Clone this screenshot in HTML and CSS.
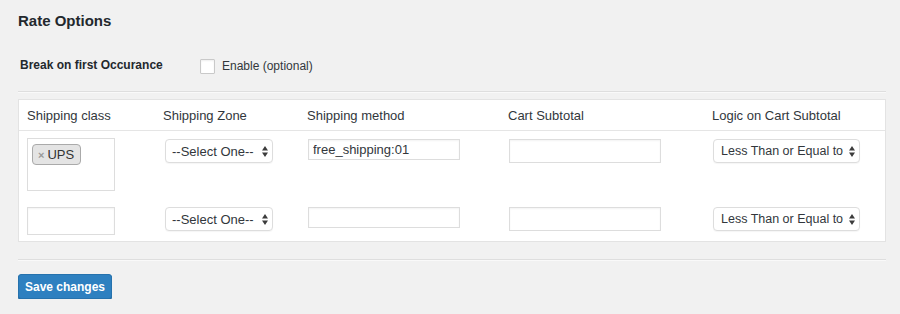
FILE: index.html
```html
<!DOCTYPE html>
<html lang="en">
<head>
  <meta charset="UTF-8" />
  <title>Rate Options</title>
  <link rel="stylesheet" href="styles.css">
</head>
<body>
  <div class="wrap">
    <h2>Rate Options</h2>

    <div class="option-row">
      <span class="option-label">Break on first Occurance</span>
      <label class="check"><input type="checkbox" name="break_first"> Enable (optional)</label>
    </div>

    <hr>

    <table class="rates">
      <colgroup>
        <col class="c1"><col class="c2"><col class="c3"><col class="c4"><col class="c5">
      </colgroup>
      <thead>
        <tr>
          <th>Shipping class</th>
          <th>Shipping Zone</th>
          <th>Shipping method</th>
          <th>Cart Subtotal</th>
          <th>Logic on Cart Subtotal</th>
        </tr>
      </thead>
      <tbody>
        <tr class="first">
          <td>
            <div class="multi">
              <span class="tag"><span class="tag-x">×</span>UPS</span>
            </div>
          </td>
          <td>
            <span class="select-wrap zone">
              <select><option>--Select One--</option></select>
              <svg class="arrows" width="6" height="11" viewBox="0 0 6 11"><path d="M3 0 L6 4.5 H0 Z M3 11 L6 6.5 H0 Z" fill="#3c3c3c"/></svg>
            </span>
          </td>
          <td><input type="text" class="method" value="free_shipping:01"></td>
          <td><input type="text" class="subtotal"></td>
          <td>
            <span class="select-wrap logic">
              <select><option>Less Than or Equal to</option></select>
              <svg class="arrows" width="6" height="11" viewBox="0 0 6 11"><path d="M3 0 L6 4.5 H0 Z M3 11 L6 6.5 H0 Z" fill="#3c3c3c"/></svg>
            </span>
          </td>
        </tr>
        <tr class="last">
          <td><input type="text" class="class-input"></td>
          <td>
            <span class="select-wrap zone">
              <select><option>--Select One--</option></select>
              <svg class="arrows" width="6" height="11" viewBox="0 0 6 11"><path d="M3 0 L6 4.5 H0 Z M3 11 L6 6.5 H0 Z" fill="#3c3c3c"/></svg>
            </span>
          </td>
          <td><input type="text" class="method"></td>
          <td><input type="text" class="subtotal"></td>
          <td>
            <span class="select-wrap logic">
              <select><option>Less Than or Equal to</option></select>
              <svg class="arrows" width="6" height="11" viewBox="0 0 6 11"><path d="M3 0 L6 4.5 H0 Z M3 11 L6 6.5 H0 Z" fill="#3c3c3c"/></svg>
            </span>
          </td>
        </tr>
      </tbody>
    </table>

    <hr class="bottom">

    <button type="submit" class="button-primary">Save changes</button>
  </div>
</body>
</html>
```

FILE: styles.css
```css
body { margin: 0; background: #f1f1f1; font-family: "Liberation Sans", Arial, sans-serif; color: #23282d; font-size: 13px; }
.wrap { padding: 11px 14px 0 18px; width: 868px; }
h2 { margin: 0; font-size: 15px; line-height: 20px; font-weight: bold; color: #23282d; }

.option-row { display: flex; align-items: center; height: 20px; margin-top: 24px; }
.option-label { width: 180px; padding-left: 2px; font-size: 12px; font-weight: bold; color: #23282d; }
.check { display: flex; align-items: center; gap: 7px; font-size: 12px; color: #32373c; padding-top: 2px; }
.check input { appearance: none; -webkit-appearance: none; margin: 0; width: 15px; height: 15px; background: #fff; border: 1px solid #c9c9c9; box-shadow: inset 0 1px 2px rgba(0,0,0,0.07); border-radius: 1px; }

hr { margin: 16px 0 0; border: 0; border-top: 1px solid #dedede; border-bottom: 1px solid #f9f9f9; height: 0; }
hr.bottom { margin-top: 17px; }

.rates { margin-top: 6px; width: 868px; table-layout: fixed; border-collapse: separate; border-spacing: 0; background: #fff; border: 1px solid #e3e3e3; }
.c1 { width: 135px; }
.c2 { width: 144px; }
.c3 { width: 201px; }
.c4 { width: 204px; }
.c5 { width: 182px; }
.rates th { height: 30px; padding: 0 9px; text-align: left; font-weight: normal; font-size: 13px; color: #32373c; border-bottom: 1px solid #e5e5e5; }
.rates th:first-child, .rates td:first-child { padding-left: 8px; }
.rates td { padding: 8px 9px 0; vertical-align: top; }
.rates tr.first td { padding-bottom: 8px; }
.rates tr.last td { padding-bottom: 6px; }

input[type=text] { box-sizing: border-box; margin: 0 0 0 1px; border: 1px solid #ddd; background: #fff; box-shadow: inset 0 1px 2px rgba(0,0,0,0.05); font-family: "Liberation Sans", Arial, sans-serif; font-size: 13px; color: #32373c; padding: 0 4px; display: block; }
.method { width: 152px; height: 21px; }
.subtotal { width: 152px; height: 24px; }
.class-input { width: 88px; height: 28px; margin-left: 0 !important; }

.multi { box-sizing: border-box; width: 88px; height: 53px; margin-top: -1px; border: 1px solid #ddd; background: #fff; padding: 5px 4px; }
.tag { display: inline-flex; align-items: center; height: 19px; padding: 0 6px 0 5px; background: #e4e4e4; border: 1px solid #aaa; border-radius: 4px; font-size: 13px; color: #333; }
.tag-x { color: #999; font-size: 11px; font-weight: bold; margin-right: 3px; }

.select-wrap { position: relative; display: inline-block; margin-left: 1px; }
.select-wrap.zone { margin-left: 2px; }
.select-wrap select { appearance: none; -webkit-appearance: none; box-sizing: border-box; height: 24px; margin: 0; padding: 0 14px 0 6px; border: 1px solid #ddd; border-radius: 4px; background: #fff; box-shadow: 0 1px 1px rgba(0,0,0,0.04); font-family: "Liberation Sans", Arial, sans-serif; font-size: 13px; color: #32373c; display: block; }
.zone select { width: 108px; }
.logic select { width: 147px; padding: 0 8px 0 7px; font-size: 12.5px; }
.arrows { position: absolute; right: 5px; top: 7px; pointer-events: none; }

.button-primary { margin-top: 13px; box-sizing: border-box; width: 94px; height: 25px; padding: 0; background: #2e80c0; border: 1px solid #2672ad; border-radius: 3px; box-shadow: 0 1px 0 #22669b; color: #fff; font-family: "Liberation Sans", Arial, sans-serif; font-size: 12px; font-weight: bold; }
```
